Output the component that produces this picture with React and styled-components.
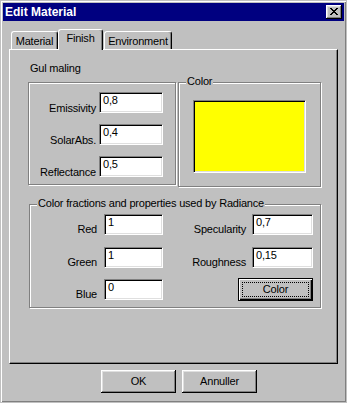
import React from "react";
import styled, { createGlobalStyle } from "styled-components";

const GlobalStyle = createGlobalStyle`
  html, body { margin: 0; padding: 0; background: #c0c0c0; }
  body { font-family: "Liberation Sans", Arial, sans-serif; font-size: 11px; }
  * { box-sizing: border-box; }
`;

const Window = styled.div`
  width: 347px;
  height: 403px;
  background: #c0c0c0;
  border: 1px solid #c0c0c0;
  box-shadow: inset 1px 1px 0 #fff, inset -1px -1px 0 #808080;
  padding: 2px;
  display: flex;
  flex-direction: column;
  font-family: "Liberation Sans", Arial, sans-serif;
  font-size: 11px;
  letter-spacing: -0.2px;
  color: #000;
`;

const TitleBar = styled.div`
  height: 18px;
  background: #000080;
  display: flex;
  align-items: center;
  justify-content: space-between;
  padding: 0 2px;
`;

const TitleText = styled.span`
  color: #fff;
  font-weight: bold;
  font-size: 12px;
  letter-spacing: 0;
  line-height: 14px;
`;

const CloseButton = styled.div`
  width: 16px;
  height: 14px;
  background: #c0c0c0;
  box-shadow: inset -1px -1px 0 #000, inset 1px 1px 0 #fff,
    inset -2px -2px 0 #808080, inset 2px 2px 0 #dfdfdf;
  display: flex;
  align-items: center;
  justify-content: center;
  padding-bottom: 1px;
`;

const Body = styled.div`
  flex: 1;
  display: flex;
  flex-direction: column;
  padding: 8px 6px 0 6px;
`;

const TabStrip = styled.div`
  display: flex;
  align-items: flex-end;
  height: 20px;
  padding-left: 2px;
  position: relative;
  z-index: 1;
`;

const Tab = styled.div`
  width: ${(p) => p.$w}px;
  height: ${(p) => (p.$active ? 21 : 18)}px;
  margin-bottom: ${(p) => (p.$active ? -1 : 0)}px;
  margin-left: ${(p) => p.$ml || 0}px;
  background: #c0c0c0;
  border-left: 1px solid #fff;
  border-top: 1px solid #fff;
  border-right: 1px solid #000;
  border-radius: 3px 3px 0 0;
  box-shadow: inset -1px 0 0 #808080;
  padding-top: ${(p) => (p.$active ? 2 : 3)}px;
  text-align: center;
  line-height: 13px;
`;

const Panel = styled.div`
  height: 315px;
  background: #c0c0c0;
  border-left: 1px solid #fff;
  border-top: 1px solid #fff;
  border-right: 1px solid #000;
  border-bottom: 1px solid #000;
  box-shadow: inset -1px -1px 0 #808080;
  padding: 12px 0 0 18px;
  display: flex;
  flex-direction: column;
`;

const TopGrid = styled.div`
  display: grid;
  grid-template-columns: 148px 143px;
  column-gap: 2px;
  row-gap: 7px;
  align-items: start;
`;

const Caption = styled.div`
  line-height: 13px;
  padding-left: 2px;
  grid-column: 1;
`;

const Group = styled.div`
  position: relative;
  border: 1px solid #808080;
  box-shadow: inset 1px 1px 0 #fff, 1px 1px 0 #fff;
  height: ${(p) => p.$h}px;
  ${(p) => (p.$w ? `width: ${p.$w}px;` : "")}
`;

const Legend = styled.span`
  position: absolute;
  top: -8px;
  left: 7px;
  padding: 0 1px;
  background: #c0c0c0;
  line-height: 13px;
  white-space: nowrap;
`;

const PropsGrid = styled.div`
  display: grid;
  grid-template-columns: 1fr 64px;
  grid-auto-rows: 21px;
  column-gap: 3px;
  row-gap: 11px;
  padding: 9px 12px 0 0;
`;

const Label = styled.div`
  text-align: right;
  line-height: 13px;
  padding-top: ${(p) => p.$top}px;
  padding-right: ${(p) => p.$pr || 0}px;
  white-space: nowrap;
`;

const Edit = styled.div`
  height: 21px;
  background: #fff;
  border-top: 1px solid #808080;
  border-left: 1px solid #808080;
  border-right: 1px solid #fff;
  border-bottom: 1px solid #fff;
  box-shadow: inset 1px 1px 0 #000, inset -1px -1px 0 #dfdfdf;
  padding: 1px 2px 0 3px;
  line-height: 13px;
  white-space: nowrap;
`;

const ColorGroupBody = styled.div`
  padding: 17px 0 0 14px;
`;

const Swatch = styled.div`
  width: 113px;
  height: 73px;
  background: #ffff00;
  border-top: 1px solid #808080;
  border-left: 1px solid #808080;
  border-right: 1px solid #fff;
  border-bottom: 1px solid #fff;
  box-shadow: inset 1px 1px 0 #000, inset -1px -1px 0 #dfdfdf;
`;

const FractionsGrid = styled.div`
  display: grid;
  grid-template-columns: 74px 59px 89px 61px;
  grid-template-rows: 33px 32px 23px;
  padding: 9px 0 0 0;
`;

const Button = styled.div`
  width: 75px;
  height: 23px;
  background: #c0c0c0;
  box-shadow: inset -1px -1px 0 #000, inset 1px 1px 0 #fff,
    inset -2px -2px 0 #808080, inset 2px 2px 0 #dfdfdf;
  display: flex;
  align-items: center;
  justify-content: center;
  line-height: 13px;
`;

const DefaultButton = styled.div`
  grid-column: 3 / 5;
  justify-self: end;
  margin-top: -1px;
  width: 75px;
  height: 23px;
  background: #c0c0c0;
  border: 1px solid #000;
  box-shadow: inset 1px 1px 0 #fff, inset -1px -1px 0 #000,
    inset -2px -2px 0 #808080;
  padding: 3px;
  display: flex;
`;

const FocusRect = styled.span`
  flex: 1;
  border: 1px dotted #000;
  display: flex;
  align-items: center;
  justify-content: center;
  line-height: 13px;
`;

const ButtonRow = styled.div`
  display: flex;
  gap: 6px;
  margin-top: 6px;
  padding-left: 92px;
`;

const CloseGlyph = () => (
  <svg width="8" height="7" viewBox="0 0 8 7" shapeRendering="crispEdges">
    {[
      [0, 0, 2], [6, 0, 2],
      [1, 1, 2], [5, 1, 2],
      [2, 2, 4],
      [3, 3, 2],
      [2, 4, 4],
      [1, 5, 2], [5, 5, 2],
      [0, 6, 2], [6, 6, 2],
    ].map(([x, y, w], i) => (
      <rect key={i} x={x} y={y} width={w} height="1" fill="#000" />
    ))}
  </svg>
);

export default function App() {
  return (
    <>
      <GlobalStyle />
      <Window>
        <TitleBar>
          <TitleText>Edit Material</TitleText>
          <CloseButton>
            <CloseGlyph />
          </CloseButton>
        </TitleBar>
        <Body>
          <TabStrip>
            <Tab $w={47}>Material</Tab>
            <Tab $w={45} $active>Finish</Tab>
            <Tab $w={68} $ml={1}>Environment</Tab>
          </TabStrip>
          <Panel>
            <TopGrid>
              <Caption>Gul maling</Caption>
              <Group $h={103} style={{ gridColumn: 1, gridRow: 2 }}>
                <PropsGrid>
                  <Label $top={10}>Emissivity</Label>
                  <Edit>0,8</Edit>
                  <Label $top={10}>SolarAbs.</Label>
                  <Edit>0,4</Edit>
                  <Label $top={10}>Reflectance</Label>
                  <Edit>0,5</Edit>
                </PropsGrid>
              </Group>
              <Group $h={105} style={{ gridColumn: 2, gridRow: 2 }}>
                <Legend>Color</Legend>
                <ColorGroupBody>
                  <Swatch />
                </ColorGroupBody>
              </Group>
            </TopGrid>
            <Group $h={104} $w={292} style={{ marginTop: 17, marginLeft: 1 }}>
              <Legend>Color fractions and properties used by Radiance</Legend>
              <FractionsGrid>
                <Label $top={9} $pr={7}>Red</Label>
                <Edit>1</Edit>
                <Label $top={9} $pr={6}>Specularity</Label>
                <Edit>0,7</Edit>
                <Label $top={9} $pr={7}>Green</Label>
                <Edit>1</Edit>
                <Label $top={9} $pr={6}>Roughness</Label>
                <Edit>0,15</Edit>
                <Label $top={9} $pr={7}>Blue</Label>
                <Edit>0</Edit>
                <DefaultButton>
                  <FocusRect>Color</FocusRect>
                </DefaultButton>
              </FractionsGrid>
            </Group>
          </Panel>
          <ButtonRow>
            <Button>OK</Button>
            <Button>Annuller</Button>
          </ButtonRow>
        </Body>
      </Window>
    </>
  );
}
